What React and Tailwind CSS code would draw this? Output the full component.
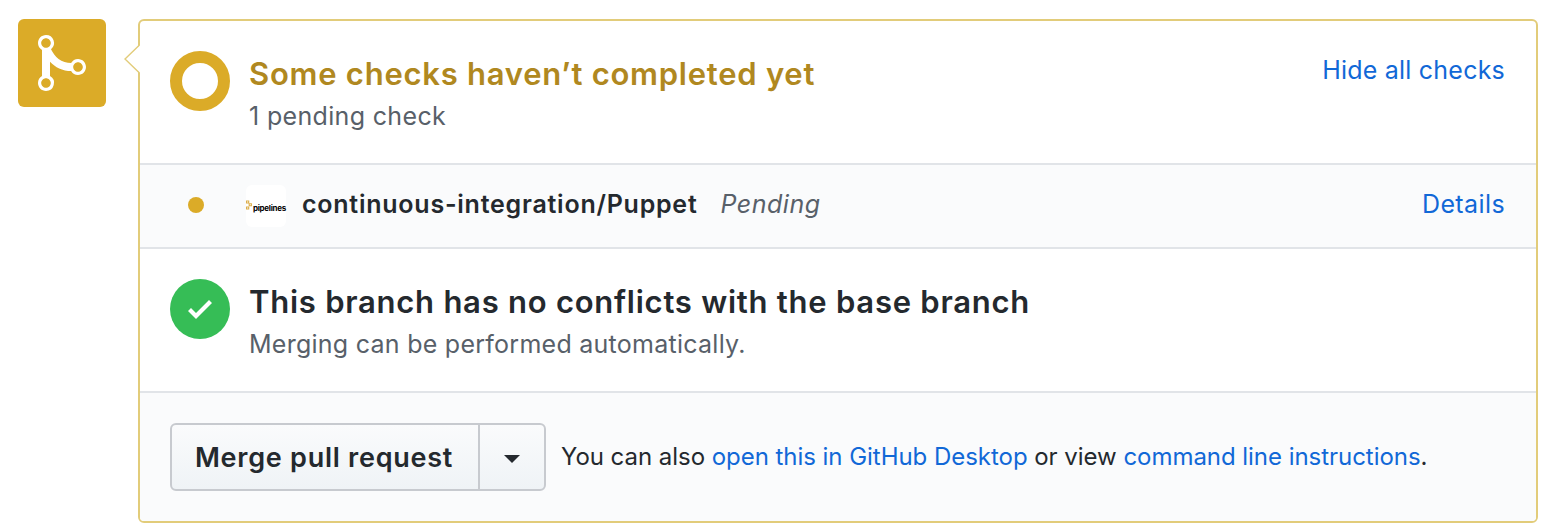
import React from "react";

function MergeIcon() {
  return (
    <svg viewBox="0 0 12 16" className="h-16 w-12 fill-white" aria-hidden="true">
      <path
        fillRule="evenodd"
        d="M10 7c-.73 0-1.38.41-1.73 1.02V8C7.22 7.98 6 7.64 5.14 6.98c-.75-.58-1.5-1.61-1.89-2.44A1.993 1.993 0 0 0 2 .99C.89.99 0 1.89 0 3a2 2 0 0 0 1 1.72v6.56c-.59.35-1 .99-1 1.72 0 1.11.89 2 2 2a1.993 1.993 0 0 0 1-3.72V7.67c.67.7 1.44 1.27 2.3 1.69.86.42 2.03.63 2.97.64v-.02c.36.61 1 1.02 1.73 1.02 1.11 0 2-.89 2-2 0-1.11-.89-2-2-2zm-6.8 6c0 .66-.55 1.2-1.2 1.2-.65 0-1.2-.55-1.2-1.2 0-.65.55-1.2 1.2-1.2.65 0 1.2.55 1.2 1.2zM3.2 3c0 .66-.55 1.2-1.2 1.2-.65 0-1.2-.55-1.2-1.2 0-.65.55-1.2 1.2-1.2.65 0 1.2.55 1.2 1.2zm6.8 7.2c-.66 0-1.2-.55-1.2-1.2 0-.65.55-1.2 1.2-1.2.65 0 1.2.55 1.2 1.2 0 .65-.55 1.2-1.2 1.2z"
      />
    </svg>
  );
}

function CheckIcon() {
  return (
    <svg viewBox="0 0 12 16" className="h-8 w-6 fill-white" aria-hidden="true">
      <path d="M12 5l-8 8-4-4 1.5-1.5L4 10l6.5-6.5L12 5z" />
    </svg>
  );
}

function PipelinesLogo() {
  return (
    <span className="mt-px flex h-[42px] w-10 items-center rounded-[6px] bg-white pt-[5px]">
      <svg viewBox="0 0 7 10" className="mt-[-7px] h-[10px] w-[7px] shrink-0" fill="none" stroke="#dcae4a" strokeWidth="1.1" aria-hidden="true">
        <path d="M0.5 1h2.2v2h-2.2zM3.2 3.8h2.2v2h-2.2zM0.5 7h2.2v2h-2.2z" />
      </svg>
      <span className="text-[8px] leading-none font-bold tracking-[-0.3px] text-black">pipelines</span>
    </span>
  );
}

export default function App() {
  return (
    <main className="flex h-[526px] w-[1556px] items-start bg-white pt-[19px] pl-[18px] font-[Inter,sans-serif] whitespace-nowrap text-[#24292e]">
      <div className="flex size-[88px] shrink-0 items-center justify-center rounded-[6px] bg-[#dbab28]">
        <MergeIcon />
      </div>

      <section className="relative ml-8 h-[504px] w-[1400px] rounded-[6px] border-2 border-[#e2cc7a] bg-white">
        <svg viewBox="0 0 16 30" className="absolute top-[23px] left-[-16px] h-[30px] w-4" aria-hidden="true">
          <path d="M16 1L1 15L16 29z" fill="#fff" />
          <path d="M15.5 1L1 15L15.5 29" fill="none" stroke="#e2cc7a" strokeWidth="1.4" />
        </svg>

        <div className="flex h-36 items-start border-b-2 border-[#e1e4e8] pt-[30px] pr-[31px] pl-[30px]">
          <span className="size-[60px] shrink-0 rounded-full border-[12px] border-[#dbab28]" />
          <div className="ml-[19px] grow">
            <h2 className="text-[31px] leading-[46px] font-semibold tracking-[0.75px] text-[#b08820]">Some checks haven’t completed yet</h2>
            <p className="text-[25px] leading-[38px] tracking-[0.34px] text-[#586069]">1 pending check</p>
          </div>
          <a className="text-[25px] leading-[38px] tracking-[0.22px] text-[#1168d7]">Hide all checks</a>
        </div>

        <div className="flex h-[84px] items-center border-b-2 border-[#e1e4e8] bg-[#fafbfc] pr-[31px] pb-0.5 pl-12">
          <span className="size-4 shrink-0 rounded-full bg-[#dbab28]" />
          <div className="ml-[42px]"><PipelinesLogo /></div>
          <strong className="ml-4 text-[25px] font-semibold tracking-[0.76px]">continuous-integration/Puppet</strong>
          <em className="ml-[23px] grow text-[25px] tracking-[0.5px] text-[#586069] italic">Pending</em>
          <a className="text-[25px] tracking-[0.4px] text-[#1168d7]">Details</a>
        </div>

        <div className="flex h-36 items-start border-b-2 border-[#e1e4e8] pt-[30px] pl-[30px]">
          <span className="flex size-[60px] shrink-0 items-center justify-center rounded-full bg-[#36bd56]">
            <CheckIcon />
          </span>
          <div className="ml-[19px]">
            <h2 className="text-[31px] leading-[46px] font-semibold tracking-[0.75px]">This branch has no conflicts with the base branch</h2>
            <p className="text-[25px] leading-[38px] tracking-[0.26px] text-[#586069]">Merging can be performed automatically.</p>
          </div>
        </div>

        <div className="flex h-32 items-center rounded-b-[4px] bg-[#fafbfc] pl-[30px]">
          <div className="flex h-[68px] w-[376px] shrink-0 rounded-[6px] border-2 border-[#c7cacf] bg-linear-to-b from-[#fafbfc] to-[#eff3f6]">
            <button className="w-[308px] border-r-2 border-[#c7cacf] pt-0.5 pr-0.5 text-[27px] font-semibold tracking-[0.74px]">Merge pull request</button>
            <button className="flex grow items-center justify-center pt-1" aria-label="Select merge method">
              <svg viewBox="0 0 16 8" className="h-2 w-4 fill-[#24292e]"><path d="M0 0h16L8 8z" /></svg>
            </button>
          </div>
          <p className="ml-[15px] text-[24px] tracking-[-0.04px]">
            You can also <a className="text-[#1168d7]">open this in GitHub Desktop</a> or view <a className="text-[#1168d7]">command line instructions</a>.
          </p>
        </div>
      </section>
    </main>
  );
}
